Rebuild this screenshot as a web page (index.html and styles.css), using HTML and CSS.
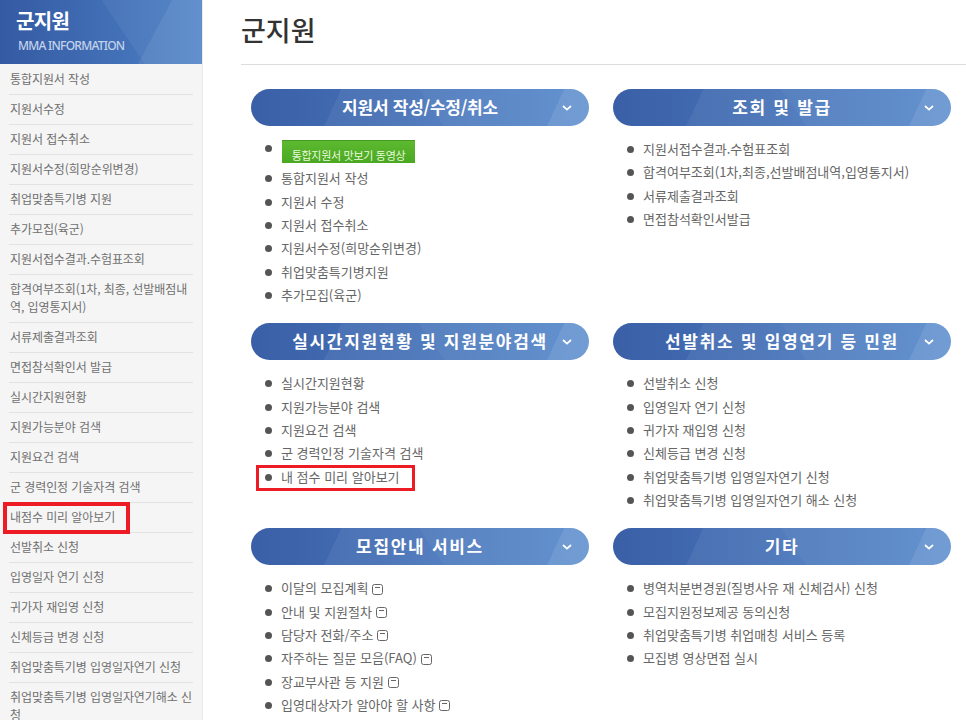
FILE: index.html
```html
<!DOCTYPE html>
<html lang="ko">
<head>
<meta charset="utf-8">
<title>군지원</title>
<link rel="stylesheet" href="styles.css">
</head>
<body>
<div class="page">
  <aside class="side">
    <div class="side-head">
      <div class="side-title">군지원</div>
      <div class="side-sub">MMA INFORMATION</div>
    </div>
    <ul class="side-menu">
      <li>통합지원서 작성</li>
      <li>지원서수정</li>
      <li>지원서 접수취소</li>
      <li>지원서수정(희망순위변경)</li>
      <li>취업맞춤특기병 지원</li>
      <li>추가모집(육군)</li>
      <li>지원서접수결과.수험표조회</li>
      <li>합격여부조회(1차, 최종, 선발배점내역, 입영통지서)</li>
      <li>서류제출결과조회</li>
      <li>면접참석확인서 발급</li>
      <li>실시간지원현황</li>
      <li>지원가능분야 검색</li>
      <li>지원요건 검색</li>
      <li>군 경력인정 기술자격 검색</li>
      <li class="marked">내점수 미리 알아보기</li>
      <li>선발취소 신청</li>
      <li>입영일자 연기 신청</li>
      <li>귀가자 재입영 신청</li>
      <li>신체등급 변경 신청</li>
      <li>취업맞춤특기병 입영일자연기 신청</li>
      <li>취업맞춤특기병 입영일자연기해소 신청</li>
    </ul>
  </aside>
  <main class="main">
    <h1 class="title">군지원</h1>
    <div class="grid">
      <section>
        <h2 class="bar"><span class="bar-text tight">지원서 작성/수정/취소</span><svg class="chev" viewBox="0 0 10 6"><path d="M1 1l4 3.6L9 1"/></svg></h2>
        <ul class="list">
          <li class="first"><span class="green">통합지원서 맛보기 동영상</span></li>
          <li>통합지원서 작성</li>
          <li>지원서 수정</li>
          <li>지원서 접수취소</li>
          <li>지원서수정(희망순위변경)</li>
          <li>취업맞춤특기병지원</li>
          <li>추가모집(육군)</li>
        </ul>
      </section>
      <section>
        <h2 class="bar"><span class="bar-text">조회 및 발급</span><svg class="chev" viewBox="0 0 10 6"><path d="M1 1l4 3.6L9 1"/></svg></h2>
        <ul class="list">
          <li>지원서접수결과.수험표조회</li>
          <li>합격여부조회(1차,최종,선발배점내역,입영통지서)</li>
          <li>서류제출결과조회</li>
          <li>면접참석확인서발급</li>
        </ul>
      </section>
      <section>
        <h2 class="bar"><span class="bar-text">실시간지원현황 및 지원분야검색</span><svg class="chev" viewBox="0 0 10 6"><path d="M1 1l4 3.6L9 1"/></svg></h2>
        <ul class="list">
          <li>실시간지원현황</li>
          <li>지원가능분야 검색</li>
          <li>지원요건 검색</li>
          <li>군 경력인정 기술자격 검색</li>
          <li class="marked">내 점수 미리 알아보기</li>
        </ul>
      </section>
      <section>
        <h2 class="bar"><span class="bar-text">선발취소 및 입영연기 등 민원</span><svg class="chev" viewBox="0 0 10 6"><path d="M1 1l4 3.6L9 1"/></svg></h2>
        <ul class="list">
          <li>선발취소 신청</li>
          <li>입영일자 연기 신청</li>
          <li>귀가자 재입영 신청</li>
          <li>신체등급 변경 신청</li>
          <li>취업맞춤특기병 입영일자연기 신청</li>
          <li>취업맞춤특기병 입영일자연기 해소 신청</li>
        </ul>
      </section>
      <section>
        <h2 class="bar"><span class="bar-text">모집안내 서비스</span><svg class="chev" viewBox="0 0 10 6"><path d="M1 1l4 3.6L9 1"/></svg></h2>
        <ul class="list">
          <li>이달의 모집계획<svg class="win" viewBox="0 0 11 11"><rect x=".5" y=".5" width="10" height="10" rx="2"/><path d="M3 3.5h5"/></svg></li>
          <li>안내 및 지원절차<svg class="win" viewBox="0 0 11 11"><rect x=".5" y=".5" width="10" height="10" rx="2"/><path d="M3 3.5h5"/></svg></li>
          <li>담당자 전화/주소<svg class="win" viewBox="0 0 11 11"><rect x=".5" y=".5" width="10" height="10" rx="2"/><path d="M3 3.5h5"/></svg></li>
          <li>자주하는 질문 모음(FAQ)<svg class="win" viewBox="0 0 11 11"><rect x=".5" y=".5" width="10" height="10" rx="2"/><path d="M3 3.5h5"/></svg></li>
          <li>장교부사관 등 지원<svg class="win" viewBox="0 0 11 11"><rect x=".5" y=".5" width="10" height="10" rx="2"/><path d="M3 3.5h5"/></svg></li>
          <li>입영대상자가 알아야 할 사항<svg class="win" viewBox="0 0 11 11"><rect x=".5" y=".5" width="10" height="10" rx="2"/><path d="M3 3.5h5"/></svg></li>
        </ul>
      </section>
      <section>
        <h2 class="bar"><span class="bar-text">기타</span><svg class="chev" viewBox="0 0 10 6"><path d="M1 1l4 3.6L9 1"/></svg></h2>
        <ul class="list">
          <li>병역처분변경원(질병사유 재 신체검사) 신청</li>
          <li>모집지원정보제공 동의신청</li>
          <li>취업맞춤특기병 취업매칭 서비스 등록</li>
          <li>모집병 영상면접 실시</li>
        </ul>
      </section>
    </div>
  </main>
</div>
</body>
</html>
```
FILE: styles.css
```css
*, *::before, *::after { box-sizing: border-box; }
html, body { margin: 0; padding: 0; height: 720px; overflow: hidden; background: #fff; }
body { font-family: "Noto Sans CJK KR", "Noto Sans", sans-serif; color: #666; }
ul { list-style: none; margin: 0; padding: 0; }
.page { display: flex; height: 720px; overflow: hidden; }

.side { width: 203px; flex: none; background: #f5f5f5; border-right: 1px solid #e9e9e9; height: 720px; overflow: hidden; }
.side-head {
  height: 64px; margin-right: -1px; padding: 7px 0 0 16px;
  background:
    linear-gradient(118deg, transparent 0, transparent 152px, rgba(255,255,255,.07) 152px),
    linear-gradient(56deg, transparent 0, transparent 120px, rgba(255,255,255,.05) 120px),
    linear-gradient(90deg, #345aa2, #4d81c7);
}
.side-title { color: #fff; font-size: 20px; font-weight: 700; line-height: 28px; letter-spacing: -.6px; }
.side-sub { color: #c3d2ea; font-size: 12px; font-weight: 500; line-height: 16px; margin: 3px 0 0 2px; letter-spacing: -.75px; font-family: "Noto Sans", sans-serif; }
.side-menu { padding: 1px 9px 0; }
.side-menu li { position: relative; font-size: 12px; line-height: 18px; padding: 5px 1px 6px; min-height: 30px; border-bottom: 1px solid #e2e2e2; color: #707070; letter-spacing: -.08px; word-break: break-all; }
.side-menu li:last-child { border-bottom: 0; }
.side-menu .marked::after { content: ""; position: absolute; left: -6px; top: -1px; width: 127px; height: 32px; border: 4px solid #ed1c24; }

.main { flex: 1; min-width: 0; padding-left: 38px; }
.title { margin: 0; height: 65px; border-bottom: 1px solid #ddd; font-size: 27px; font-weight: 500; line-height: 60px; color: #333; }
.grid { display: grid; grid-template-columns: 338px 338px; column-gap: 24px; row-gap: 16px; padding: 24px 0 0 10px; }
.bar {
  position: relative; margin: 0; height: 37px; border-radius: 19px; display: flex; align-items: center; justify-content: center;
  color: #fff; font-size: 17px; font-weight: 700; line-height: 35px; padding-bottom: 2px;
  background:
    linear-gradient(115deg, transparent 0, transparent 284px, rgba(255,255,255,.09) 284px),
    linear-gradient(56deg, transparent 0, transparent 160px, rgba(255,255,255,.035) 160px),
    linear-gradient(115deg, transparent 0, transparent 82px, rgba(255,255,255,.06) 82px),
    linear-gradient(90deg, #3a5fa6, #5488cb);
}
.bar-text { letter-spacing: 1.7px; }
.bar-text.tight { letter-spacing: -.25px; }
.chev { position: absolute; right: 17px; top: 16px; width: 10px; height: 6px; fill: none; stroke: #fff; stroke-width: 1.8; }
.list { padding-top: 12px; }
.list li { position: relative; font-size: 13px; line-height: 22.5px; height: 23.33px; padding-left: 30px; color: #666; white-space: nowrap; }
.list li::before { content: ""; position: absolute; left: 14px; top: 8px; width: 7px; height: 7px; border-radius: 50%; background: #555; }
.list li.first { height: 29.33px; padding-left: 31px; padding-top: 2px; }
.list li.first::before { top: 7px; }
.green { display: inline-block; width: 133px; height: 23px; line-height: 28px; text-align: center; font-size: 11px; letter-spacing: -.3px; color: #eaf9dd; background: linear-gradient(#5cb92f, #4aa823); border-top: 1px solid #4a9a22; vertical-align: top; }
.win { width: 11px; height: 11px; margin-left: 4px; vertical-align: -1.5px; fill: none; stroke: #666; stroke-width: 1; }
.list .marked::after { content: ""; position: absolute; left: 5px; top: -1px; width: 159px; height: 26px; border: 3.5px solid #ed1c24; }
```
